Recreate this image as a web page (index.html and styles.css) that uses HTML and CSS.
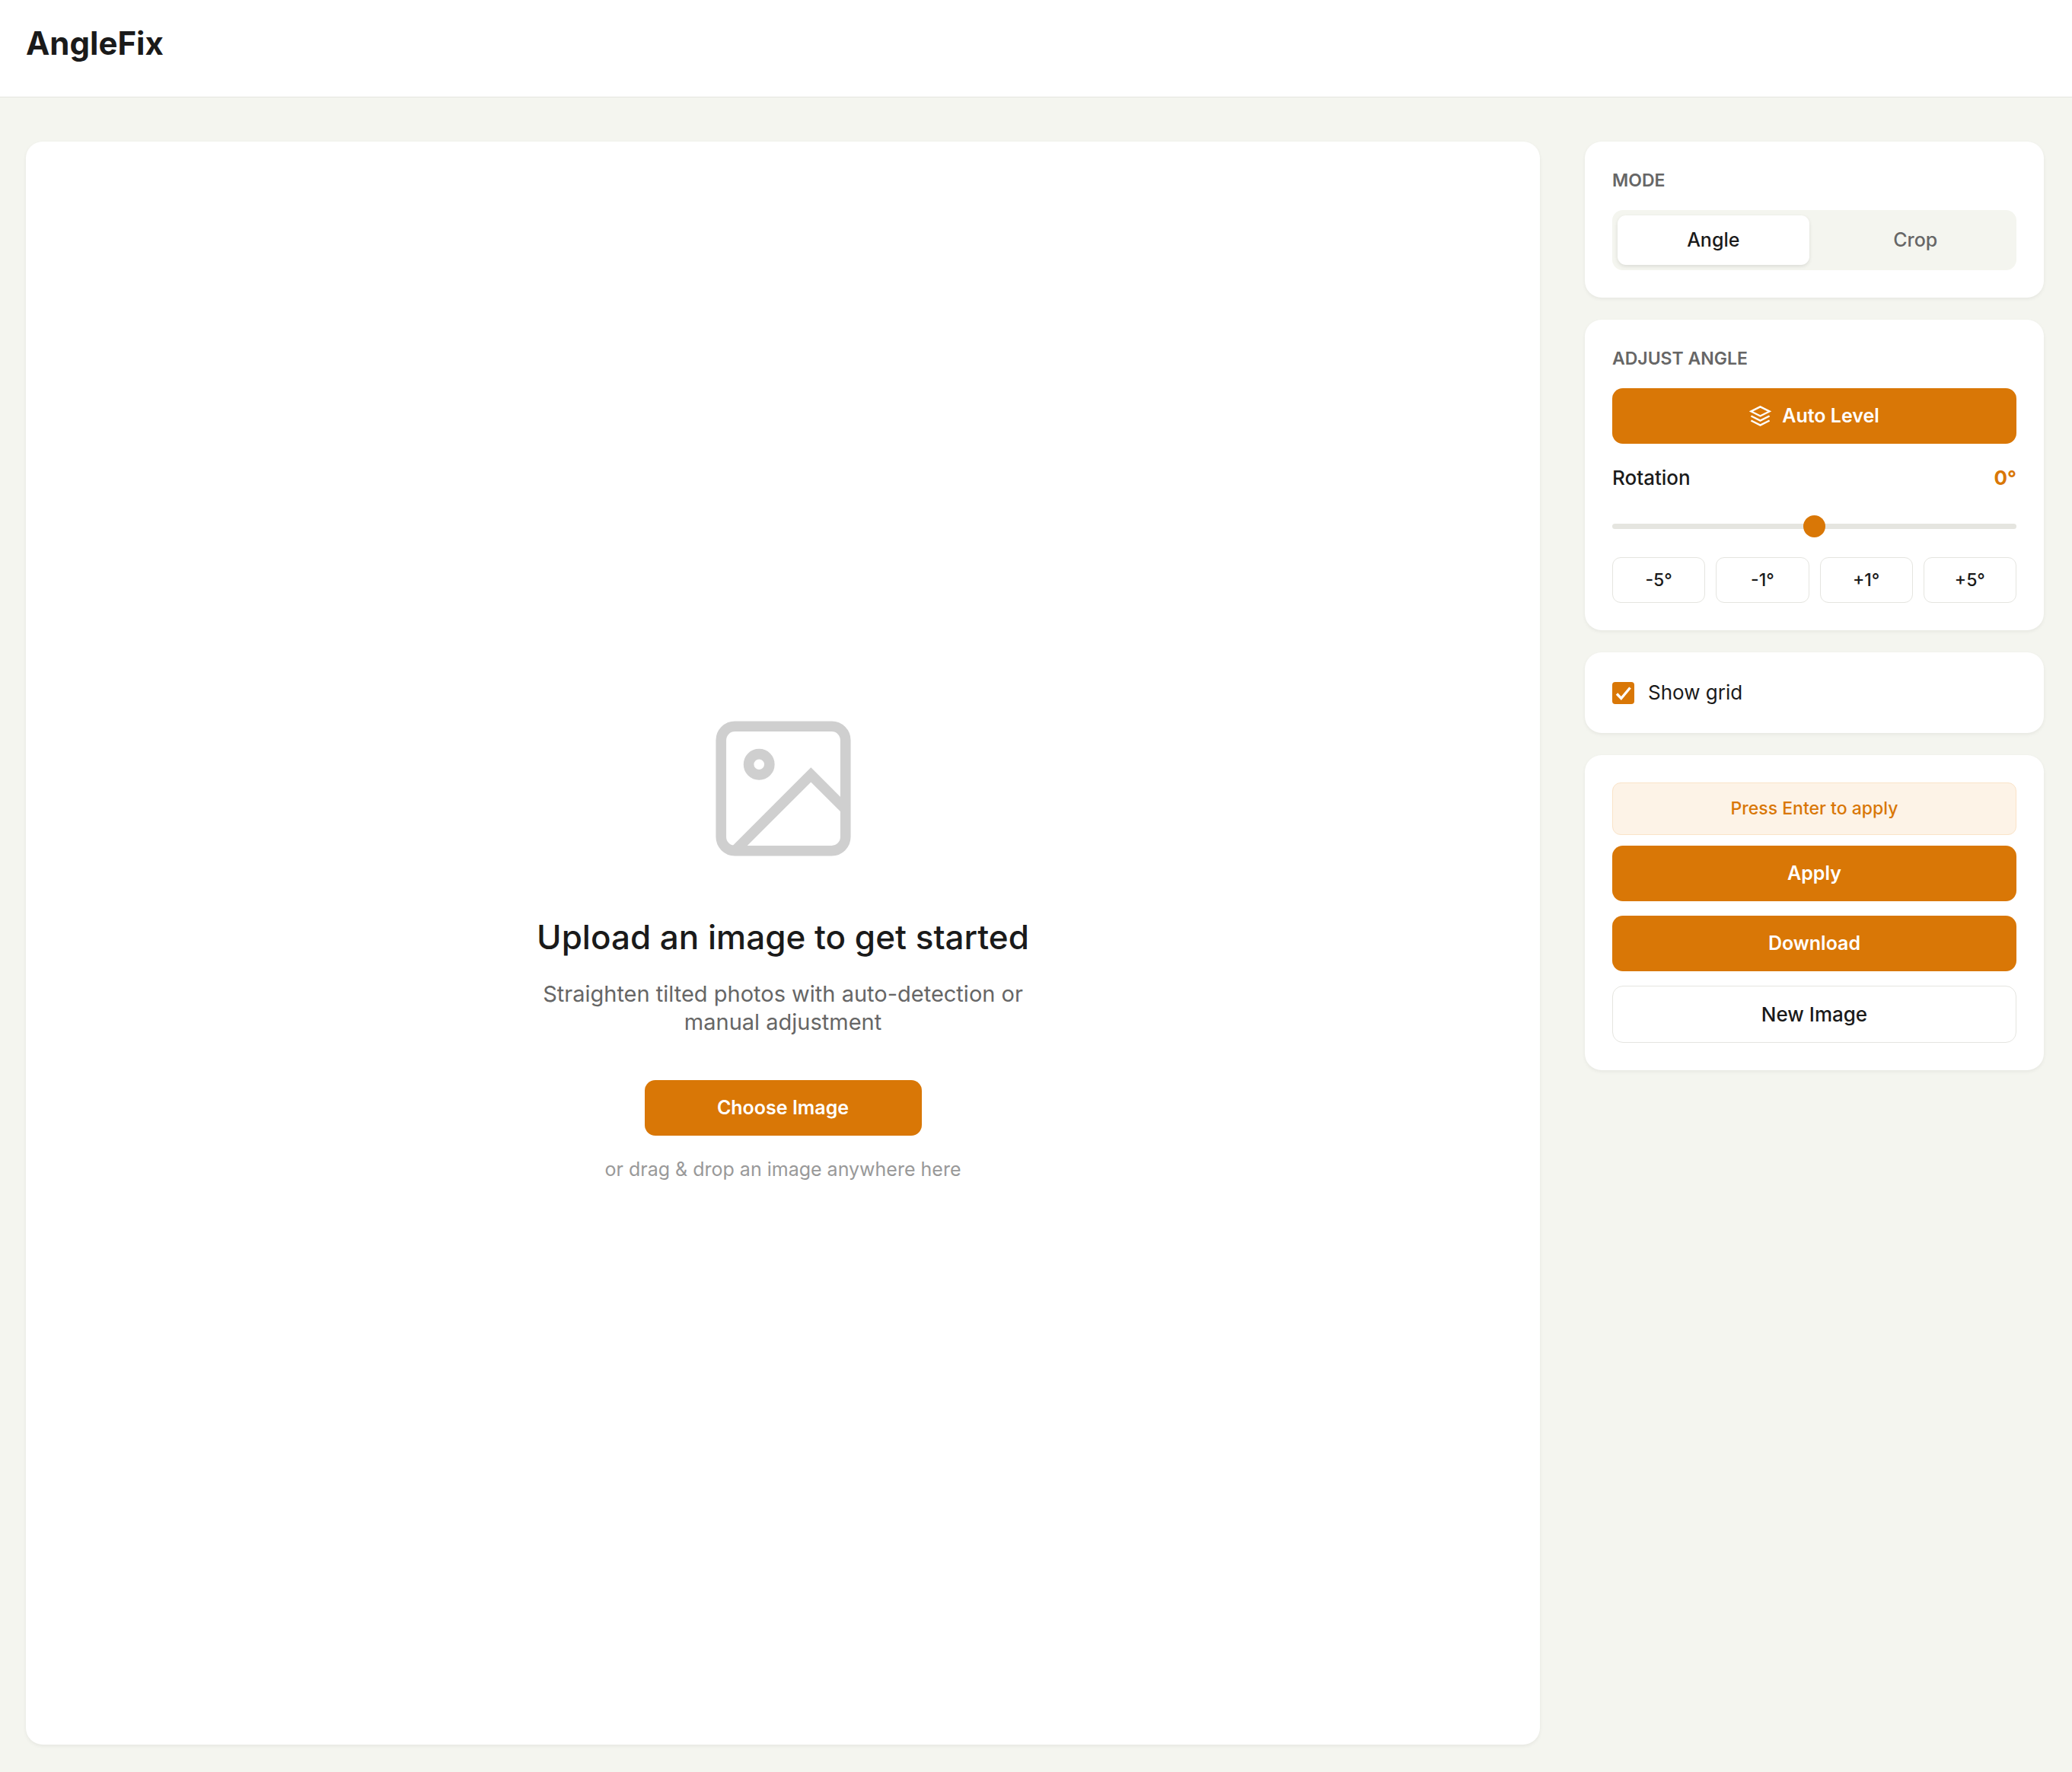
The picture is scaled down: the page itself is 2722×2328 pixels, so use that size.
FILE: index.html
```html
<!DOCTYPE html>
<html lang="en">

<head>
  <meta charset="UTF-8" />
  <title>AngleFix</title>
  <meta name="viewport" content="width=device-width, initial-scale=1.0" />
  <link rel="stylesheet" href="styles.css">
</head>

<body>

  <header class="header">
    <h1 class="logo">AngleFix</h1>
  </header>

  <main class="layout">

    <!-- Canvas / drop zone -->
    <section class="canvas-area" id="dropZone">
      <div class="upload">
        <svg class="upload-icon" viewBox="0 0 24 24" fill="none" stroke="currentColor" stroke-width="1.5" aria-hidden="true">
          <rect x="3" y="3" width="18" height="18" rx="2" ry="2" />
          <circle cx="8.5" cy="8.5" r="1.5" />
          <polyline points="21 15 16 10 5 21" />
        </svg>
        <h2 class="upload-title">Upload an image to get started</h2>
        <p class="upload-text">Straighten tilted photos with auto-detection or manual adjustment</p>
        <button type="button" class="btn btn-primary upload-btn">Choose Image</button>
        <p class="upload-hint">or drag &amp; drop an image anywhere here</p>
      </div>
    </section>

    <!-- Controls -->
    <aside class="sidebar">
      <section class="card">
        <h3 class="card-title">Mode</h3>
        <div class="mode-toggle">
          <button type="button" class="mode-btn active">Angle</button>
          <button type="button" class="mode-btn">Crop</button>
        </div>
      </section>

      <section class="card">
        <h3 class="card-title">Adjust Angle</h3>
        <button type="button" class="btn btn-primary">
          <svg class="btn-icon" viewBox="0 0 24 24" fill="none" stroke="currentColor" stroke-width="2" aria-hidden="true">
            <path d="M12 2L2 7l10 5 10-5-10-5z" />
            <path d="M2 17l10 5 10-5" />
            <path d="M2 12l10 5 10-5" />
          </svg>
          Auto Level
        </button>
        <div class="slider-header">
          <label for="rotation">Rotation</label>
          <output class="slider-value" for="rotation" id="rotationValue">0°</output>
        </div>
        <input class="slider" type="range" id="rotation" min="-45" max="45" value="0">
        <div class="step-buttons">
          <button type="button" class="step-btn">-5°</button>
          <button type="button" class="step-btn">-1°</button>
          <button type="button" class="step-btn">+1°</button>
          <button type="button" class="step-btn">+5°</button>
        </div>
      </section>

      <section class="card">
        <label class="checkbox-label" for="showGrid">
          <input class="checkbox" type="checkbox" id="showGrid" checked>
          Show grid
        </label>
      </section>

      <section class="card">
        <div class="enter-hint">Press Enter to apply</div>
        <div class="actions">
          <button type="button" class="btn btn-primary">Apply</button>
          <button type="button" class="btn btn-primary">Download</button>
          <button type="button" class="btn btn-secondary">New Image</button>
        </div>
      </section>
    </aside>

  </main>

</body>

</html>
```
FILE: styles.css
```css
:root {
  --bg: #f4f5ef;
  --surface: #ffffff;
  --text: #1a1a1a;
  --text-secondary: #666666;
  --text-muted: #999999;
  --border: #e5e5e0;
  --accent: #d97706;
  --accent-light: #fdf3e7;
  --shadow: 0 2px 5px rgba(0, 0, 0, 0.06);
}

* {
  margin: 0;
  padding: 0;
  box-sizing: border-box;
}

body {
  display: flex;
  flex-direction: column;
  min-height: 100vh;
  font-family: Inter, 'Liberation Sans', sans-serif;
  font-size: 26px;
  background: var(--bg);
  color: var(--text);
}

button {
  font-family: inherit;
  cursor: pointer;
}

.header {
  padding: 30px 34px 43px;
  background: var(--surface);
  border-bottom: 1px solid var(--border);
}

.logo {
  font-size: 42px;
  line-height: 54px;
  font-weight: 700;
}

.layout {
  flex: 1;
  display: grid;
  grid-template-columns: 1fr 603px;
  gap: 59px;
  padding: 58px 37px 36px 34px;
}

.canvas-area {
  display: flex;
  align-items: center;
  justify-content: center;
  background: var(--surface);
  border-radius: 22px;
  box-shadow: var(--shadow);
}

/* Empty state */
.upload {
  display: flex;
  flex-direction: column;
  align-items: center;
  max-width: 654px;
  text-align: center;
}

.upload-icon {
  width: 218px;
  height: 218px;
  margin-bottom: 60px;
  color: #cfcfcf;
}

.upload-title {
  margin-bottom: 29px;
  font-size: 44px;
  line-height: 53px;
  font-weight: 500;
}

.upload-text {
  margin-bottom: 58px;
  font-size: 29px;
  line-height: 37px;
  color: var(--text-secondary);
}

.upload-btn {
  max-width: 364px;
  margin-bottom: 29px;
}

.upload-hint {
  font-size: 25px;
  line-height: 30px;
  color: var(--text-muted);
}

/* Sidebar */
.sidebar {
  display: flex;
  flex-direction: column;
  gap: 29px;
}

.card {
  padding: 36px;
  background: var(--surface);
  border-radius: 22px;
  box-shadow: var(--shadow);
}

.card-title {
  margin-bottom: 23px;
  font-size: 23px;
  line-height: 31px;
  font-weight: 600;
  text-transform: uppercase;
  color: var(--text-secondary);
}

.mode-toggle {
  display: flex;
  gap: 14px;
  padding: 7px;
  background: var(--bg);
  border-radius: 14px;
}

.mode-btn {
  flex: 1;
  padding: 17px;
  border: none;
  border-radius: 11px;
  background: transparent;
  font-size: 25px;
  line-height: 31px;
  font-weight: 500;
  color: var(--text-secondary);
}

.mode-btn.active {
  background: var(--surface);
  color: var(--text);
  box-shadow: 0 2px 5px rgba(0, 0, 0, 0.1);
}

.btn {
  display: flex;
  align-items: center;
  justify-content: center;
  gap: 14px;
  width: 100%;
  padding: 20px;
  border: none;
  border-radius: 14px;
  font-size: 25px;
  line-height: 33px;
  font-weight: 600;
}

.btn-primary {
  background: var(--accent);
  color: #ffffff;
}

.btn-secondary {
  background: var(--surface);
  border: 1px solid var(--border);
  font-size: 26px;
  font-weight: 500;
  color: var(--text);
}

.btn-icon {
  width: 29px;
  height: 29px;
}

.slider-header {
  display: flex;
  justify-content: space-between;
  margin: 28px 0 33px;
  line-height: 33px;
  font-weight: 500;
}

.slider-value {
  font-weight: 700;
  color: var(--accent);
}

.slider {
  display: block;
  width: 100%;
  height: 29px;
  margin-bottom: 26px;
  background: transparent;
  appearance: none;
  -webkit-appearance: none;
}

.slider::-webkit-slider-runnable-track {
  height: 7px;
  background: var(--border);
  border-radius: 4px;
}

.slider::-webkit-slider-thumb {
  -webkit-appearance: none;
  width: 29px;
  height: 29px;
  margin-top: -11px;
  background: var(--accent);
  border-radius: 50%;
}

.step-buttons {
  display: grid;
  grid-template-columns: repeat(4, 1fr);
  gap: 14px;
}

.step-btn {
  padding: 14px;
  border: 1px solid var(--border);
  border-radius: 11px;
  background: var(--surface);
  font-size: 23px;
  line-height: 30px;
  font-weight: 500;
  color: var(--text);
}

.checkbox-label {
  display: flex;
  align-items: center;
  gap: 18px;
  line-height: 34px;
  cursor: pointer;
}

.checkbox {
  width: 29px;
  height: 29px;
  border: 2px solid var(--accent);
  border-radius: 4px;
  appearance: none;
  -webkit-appearance: none;
}

.checkbox:checked {
  border: none;
  background: var(--accent) url("data:image/svg+xml,%3Csvg xmlns='http://www.w3.org/2000/svg' viewBox='0 0 29 29'%3E%3Cpath d='M6 15.5l5.800 6L23.500 7.500' fill='none' stroke='white' stroke-width='3.400'/%3E%3C/svg%3E") center / contain no-repeat;
}

.enter-hint {
  margin-bottom: 14px;
  padding: 19px;
  background: var(--accent-light);
  border: 1px solid #fae3c8;
  border-radius: 11px;
  font-size: 23px;
  line-height: 29px;
  font-weight: 500;
  text-align: center;
  color: var(--accent);
}

.actions {
  display: flex;
  flex-direction: column;
  gap: 19px;
}
```
